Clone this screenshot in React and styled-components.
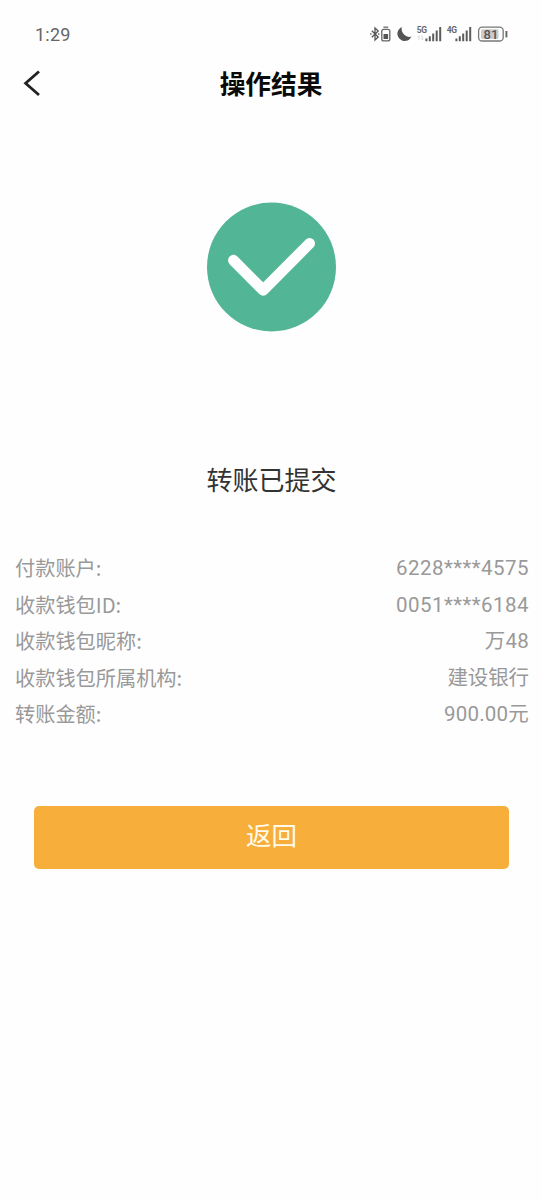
import React from "react";
import styled, { createGlobalStyle } from "styled-components";

const details = [
  { label: "付款账户:", value: "6228****4575", spacing: 0.45 },
  { label: "收款钱包ID:", value: "0051****6184", spacing: 0.45 },
  { label: "收款钱包昵称:", value: "万48", spacing: 0.2 },
  { label: "收款钱包所属机构:", value: "建设银行", spacing: -0.1 },
  { label: "转账金额:", value: "900.00元", spacing: 0.2 },
];

function StatusIcons() {
  return (
    <svg width='140' height='20' viewBox='0 0 140 20' fill='none'>
      {/* bluetooth */}
      <path
        d='M1.8 6.8L8.2 13L5 16V4L8.2 7L1.8 13.2'
        stroke='#555'
        strokeWidth='1.3'
      />
      <path d='M0.2 10h1.4M8 10h1.4' stroke='#666' strokeWidth='1.3' />
      {/* device battery */}
      <path d='M13.4 3.2h4.8' stroke='#777' strokeWidth='1.4' />
      <rect
        x='11.8'
        y='5.3'
        width='8'
        height='11.6'
        rx='2'
        stroke='#666'
        strokeWidth='1.3'
      />
      <rect x='13.5' y='10' width='4.6' height='5' fill='#555' />
      {/* do not disturb */}
      <path
        d='M31.8 3A7.3 7.3 0 1 0 41.4 12.6C36.6 14.2 30.4 9.2 31.8 3Z'
        fill='#555'
      />
      {/* signals */}
      <text x='46.8' y='8.8' className='net'>
        5G
      </text>
      <path
        d='M49 12v4M47.5 13l1.5-1.5M52 11.5v4M53.5 14.5L52 16'
        stroke='#d8d8d8'
        strokeWidth='1'
      />
      <path
        d='M56.4 14.5v2.8M59.8 12.3v5M63.2 9.5v7.8M66.7 6.5v10.8M70.2 3v14.3'
        stroke='#5c5c5c'
        strokeWidth='2'
      />
      <text x='76.8' y='8.8' className='net'>
        4G
      </text>
      <path
        d='M86.4 14.5v2.8M89.8 12.3v5M93.2 9.5v7.8M96.7 6.5v10.8M100.2 3v14.3'
        stroke='#5c5c5c'
        strokeWidth='2'
      />
      {/* battery */}
      <rect
        x='108.6'
        y='3.2'
        width='24.6'
        height='13.8'
        rx='3.6'
        stroke='#777'
        strokeWidth='1.3'
      />
      <rect x='111' y='5.3' width='17.5' height='9.6' rx='1.5' fill='#ccc' />
      <text x='121' y='14.7' textAnchor='middle' className='level'>
        81
      </text>
      <path d='M136.4 7v6.4' stroke='#666' strokeWidth='1.9' />
    </svg>
  );
}

function App() {
  return (
    <Page>
      <GlobalStyle />
      <StatusBar>
        <span>1:29</span>
        <StatusIcons />
      </StatusBar>
      <Header>
        <BackButton aria-label='返回'>
          <svg width='20' height='28' viewBox='0 0 20 28' fill='none'>
            <path d='M17 2.5L3.6 14.3L17 26' stroke='#222' strokeWidth='2.8' />
          </svg>
        </BackButton>
        <h1>操作结果</h1>
      </Header>
      <Result>
        <svg width='130' height='130' viewBox='0 0 130 130' fill='none'>
          <circle cx='64.5' cy='65' r='64.5' fill='#52b595' />
          <path
            d='M26.5 58.3L56.2 88.2L102.5 41.5'
            stroke='#fff'
            strokeWidth='11'
            strokeLinecap='round'
            strokeLinejoin='round'
          />
        </svg>
        <p>转账已提交</p>
      </Result>
      <DetailList>
        {details.map((item) => (
          <DetailRow key={item.label}>
            <dt>{item.label}</dt>
            <Value $spacing={item.spacing}>{item.value}</Value>
          </DetailRow>
        ))}
      </DetailList>
      <ReturnButton>返回</ReturnButton>
    </Page>
  );
}

export default App;

const GlobalStyle = createGlobalStyle`
  * {
    box-sizing: border-box;
  }
  body {
    margin: 0;
    background-color: #fefefe;
  }
`;

const Page = styled.div`
  min-height: 1200px;
  display: flex;
  flex-direction: column;
  background-color: #fefefe;
  font-family: "Noto Sans CJK SC", sans-serif;
`;

const StatusBar = styled.div`
  height: 55px;
  display: flex;
  justify-content: space-between;
  align-items: center;
  padding: 13px 32px 0 35px;
  color: #666;
  font-family: "Roboto", sans-serif;
  font-size: 18px;
  letter-spacing: 0.2px;

  .net {
    font: bold 8.5px "Roboto", sans-serif;
    letter-spacing: -0.3px;
    fill: #666;
  }
  .level {
    font: 500 13px "Roboto", sans-serif;
    letter-spacing: 0;
    fill: #555;
  }
`;

const Header = styled.header`
  height: 56px;
  display: grid;
  grid-template-columns: 60px 1fr 60px;
  align-items: center;

  h1 {
    margin: 0;
    color: #0a0a0a;
    font-size: 25.7px;
    font-weight: bold;
    line-height: 38px;
    text-align: center;
  }
`;

const BackButton = styled.button`
  display: flex;
  padding: 0 0 0 22px;
  border: none;
  background: none;
`;

const Result = styled.section`
  display: flex;
  flex-direction: column;
  align-items: center;
  padding: 91px 0 0 1px;

  p {
    margin: 127px 0 0;
    color: #333;
    font-size: 26px;
    line-height: 40px;
  }
`;

const DetailList = styled.dl`
  margin: 51px 13px 0 15px;
`;

const DetailRow = styled.div`
  height: 36.5px;
  display: flex;
  justify-content: space-between;
  align-items: center;
  color: #999;
  font-size: 20.2px;
  line-height: 30px;
`;

const Value = styled.dd`
  margin: 0;
  font-family: "Roboto", "Noto Sans CJK SC", sans-serif;
  font-size: 20.5px;
  letter-spacing: ${(props) => props.$spacing}px;
`;

const ReturnButton = styled.button`
  height: 63px;
  margin: 73.5px 33px 0 34px;
  padding: 0 0 8px;
  border: none;
  border-radius: 5px;
  background-color: #f7ae3b;
  color: #fffbea;
  font-family: inherit;
  font-size: 25.5px;
`;
